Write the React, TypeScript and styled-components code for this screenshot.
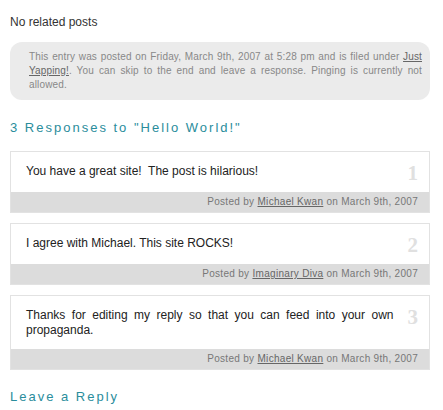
import React from 'react';
import styled, { createGlobalStyle } from 'styled-components';

const GlobalStyle = createGlobalStyle`
	html, body {
		margin: 0;
		padding: 0;
		background: #ffffff;
	}
	body {
		font-family: 'Liberation Sans', Arial, sans-serif;
		color: #333;
	}
`;

const Page = styled.div`
	width: 420px;
	padding: 14px 13px 0 10px;
`;

const Related = styled.p`
	margin: 0 0 12px;
	font-size: 12px;
	line-height: 16px;
	color: #333;
`;

const MetaBox = styled.div`
	background: #ebebeb;
	border-radius: 12px;
	padding: 8px 8px 8px 19px;
	font-size: 10px;
	line-height: 14px;
	letter-spacing: 0.15px;
	color: #888;
	text-align: justify;

	a {
		color: #666;
		text-decoration: underline;
	}
`;

const Heading = styled.h3`
	margin: 20px 0 15px;
	font-size: 13px;
	font-weight: normal;
	line-height: 16px;
	letter-spacing: 2px;
	color: #2a8d9c;
`;

const CommentList = styled.ol`
	list-style: none;
	margin: 0;
	padding: 0;
	display: flex;
	flex-direction: column;
	gap: 10px;
`;

const Comment = styled.li`
	border: 1px solid #e2e2e2;
	background: #fff;
`;

const CommentBody = styled.div`
	display: flex;
	align-items: flex-start;
	gap: 14px;
	padding: 12px 11px 11px 15px;
`;

const CommentText = styled.p`
	flex: 1;
	margin: 0;
	font-size: 12px;
	line-height: 15px;
	color: #222;
	text-align: justify;
`;

const Number = styled.span`
	font-family: 'Liberation Serif', 'Times New Roman', serif;
	font-weight: bold;
	font-size: 21px;
	line-height: 15px;
	margin-top: 2px;
	color: #e0e0e0;
`;

const CommentFooter = styled.div`
	background: #dcdcdc;
	padding: 4px 11px 4px 15px;
	font-size: 10px;
	line-height: 12px;
	letter-spacing: 0.3px;
	color: #777;
	text-align: right;

	a {
		color: #666;
		text-decoration: underline;
	}
`;

const Reply = styled.h3`
	margin: 19px 0 0;
	font-size: 13px;
	font-weight: normal;
	line-height: 16px;
	letter-spacing: 2px;
	color: #2a8d9c;
`;

const comments = [
	{ id: 1, text: 'You have a great site!\u00a0 The post is hilarious!', author: 'Michael Kwan', date: 'March 9th, 2007' },
	{ id: 2, text: 'I agree with Michael. This site ROCKS!', author: 'Imaginary Diva', date: 'March 9th, 2007' },
	{
		id: 3,
		text: 'Thanks for editing my reply so that you can feed into your own propaganda.',
		author: 'Michael Kwan',
		date: 'March 9th, 2007',
	},
];

function App() {
	return (
		<>
			<GlobalStyle />
			<Page>
				<Related>No related posts</Related>
				<MetaBox>
					This entry was posted on Friday, March 9th, 2007 at 5:28 pm and is filed under <a href="#">Just Yapping!</a>. You can skip to the end and leave a response. Pinging is currently not allowed.
				</MetaBox>
				<Heading>3 Responses to "Hello World!"</Heading>
				<CommentList>
					{comments.map((c) => (
						<Comment key={c.id}>
							<CommentBody>
								<CommentText>{c.text}</CommentText>
								<Number>{c.id}</Number>
							</CommentBody>
							<CommentFooter>
								Posted by <a href="#">{c.author}</a> on {c.date}
							</CommentFooter>
						</Comment>
					))}
				</CommentList>
				<Reply>Leave a Reply</Reply>
			</Page>
		</>
	);
}

export default App;
